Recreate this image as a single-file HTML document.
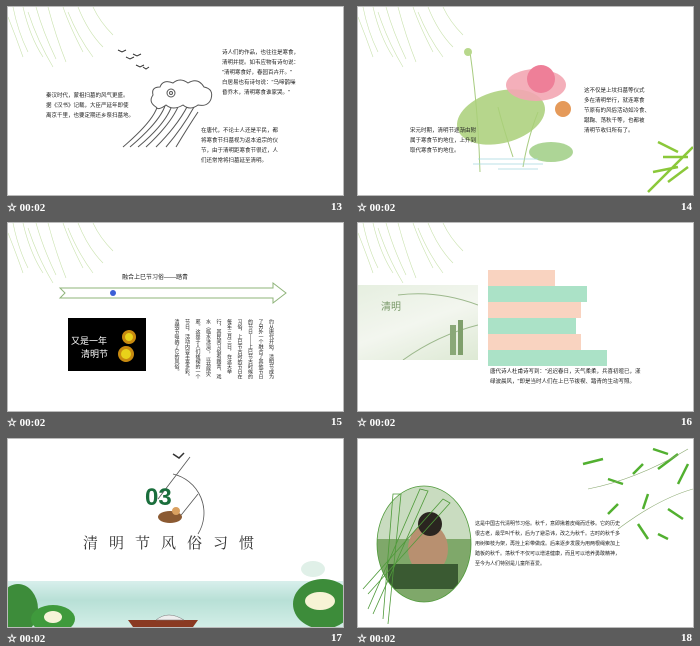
<!DOCTYPE html>
<html><head><meta charset="utf-8"><style>
*{margin:0;padding:0;box-sizing:border-box}
body{width:700px;height:646px;background:#5c5c5c;position:relative;overflow:hidden;font-family:"Liberation Sans","Noto Sans CJK SC",sans-serif}
.s{position:absolute;width:337px;height:190px;background:#fff;border:1px solid #bbb;overflow:hidden}
.f{position:absolute;color:#fff;font-weight:bold;font-size:11px;font-family:"Liberation Serif",serif}
.t{position:absolute;font-size:5.5px;line-height:10px;color:#222;white-space:nowrap}
.a{position:absolute}
</style></head><body>
<svg width="0" height="0" style="position:absolute"><defs>
<g id="wil" stroke="#a6cf78" stroke-width="0.6" fill="none" opacity="0.6">
<path d="M5 0 Q10 25 20 45"/><path d="M15 0 Q22 30 35 50"/><path d="M28 0 Q35 25 48 52"/><path d="M40 0 Q48 30 58 55"/><path d="M55 0 Q62 20 75 45"/><path d="M70 0 Q80 25 95 40"/><path d="M85 0 Q92 15 105 28"/><path d="M0 10 Q8 30 15 50"/><path d="M20 5 Q30 35 45 60"/><path d="M60 5 Q70 30 85 50"/>
</g></defs></svg>

<!-- slide 13 -->
<div class="s" style="left:7px;top:6px">
<svg class="a" style="left:0;top:0" width="120" height="70"><use href="#wil"/></svg>
<svg class="a" style="left:0;top:0" width="337" height="190">
<g stroke="#333" stroke-width="1" fill="none"><path d="M110 43l4 2 4-2M118 50l4 2 4-2M125 47l4 2 4-2M128 58l4 2 4-2M135 60l3 2 3-2"/></g>
<g stroke="#555" stroke-width="1" fill="#fff">
<path d="M115 140 Q150 110 150 95 M122 140 Q155 112 158 95 M130 140 Q160 115 165 95 M138 140 Q165 115 172 95 M148 140 Q170 118 180 98 M158 140 Q175 120 186 100 M168 140 Q180 120 190 105" fill="none"/>
<path d="M148 100 Q140 95 145 88 Q143 80 152 80 Q155 72 165 76 Q172 70 180 76 Q190 70 196 80 Q206 82 203 92 Q200 100 190 98 Q182 104 175 98 Q165 104 158 98 Q150 104 148 100Z"/>
<circle cx="163" cy="86" r="4"/><circle cx="163" cy="86" r="1.5"/>
</g></svg>
<div class="t" style="left:38px;top:84px">秦汉时代，蒙祖扫墓的风气更盛。<br>据《汉书》记载，大臣严延年即使<br>离京千里，也要定期还乡祭扫墓地。</div>
<div class="t" style="left:214px;top:41px">诗人们的作品，也往往是寒食，<br>清明并提。如韦应物有诗句说：<br>"清明寒食好，春园百卉开。"<br>白居易也有诗句说："乌啼鹊噪<br>昏乔木，清明寒食谁家哭。"</div>
<div class="t" style="left:193px;top:119px">在唐代，不论士人还是平民，都<br>将寒食节扫墓视为返本追宗的仪<br>节，由于清明距寒食节很近，人<br>们还常常将扫墓延至清明。</div>
</div>
<div class="f" style="left:7px;top:201px">☆ 00:02</div><div class="f" style="left:331px;top:201px">13</div>

<!-- slide 14 -->
<div class="s" style="left:357px;top:6px">
<svg class="a" style="left:0;top:0" width="120" height="70"><use href="#wil"/></svg>
<svg class="a" style="left:0;top:0" width="337" height="190">
<g stroke="#a8cc80" stroke-width="1" fill="none"><path d="M112 45 Q120 100 122 165"/><path d="M155 150 Q145 120 140 100"/><path d="M165 160 Q170 130 180 105"/></g>
<ellipse cx="143" cy="110" rx="45" ry="26" fill="#a9cf78" opacity="0.85" transform="rotate(-15 143 110)"/>
<ellipse cx="193" cy="145" rx="22" ry="10" fill="#9fce84" opacity="0.85"/>
<ellipse cx="178" cy="78" rx="30" ry="16" fill="#f3a6b2" opacity="0.9"/>
<ellipse cx="183" cy="72" rx="14" ry="14" fill="#ee7f98"/>
<circle cx="205" cy="102" r="8" fill="#e59a5a"/>
<circle cx="110" cy="45" r="4" fill="#b8d88c"/>
<g stroke="#a5d8e0" fill="none" stroke-width="0.8"><path d="M120 152h60M115 157h70M140 162h40"/></g>
<g stroke="#8bc83a" stroke-width="2.5" fill="none"><path d="M290 185 Q315 160 335 140M300 135l20 10M295 165l25-5M305 150l25 0M310 175l20-15"/></g>
</svg>
<div class="t" style="left:52px;top:119px">宋元时期，清明节逐渐由附<br>属于寒食节的地位，上升到<br>取代寒食节的地位。</div>
<div class="t" style="left:226px;top:79px">这不仅是上坟扫墓等仪式<br>多在清明举行，就连寒食<br>节原有的风俗活动如冷食、<br>蹴鞠、荡秋千等，也都被<br>清明节收归所有了。</div>
</div>
<div class="f" style="left:357px;top:201px">☆ 00:02</div><div class="f" style="left:681px;top:201px">14</div>

<!-- slide 15 -->
<div class="s" style="left:7px;top:222px">
<svg class="a" style="left:0;top:0" width="120" height="70"><use href="#wil"/></svg>
<svg class="a" style="left:0;top:0" width="337" height="190">
<path d="M52 65 H265 V60 L278 70 L265 80 V75 H52 L57 70 Z" fill="#fff" stroke="#8fb47a" stroke-width="1"/>
<circle cx="105" cy="70" r="3" fill="#3b5fd6"/>
</svg>
<div class="t" style="left:114px;top:50px;font-size:6px">融合上巳节习俗——踏青</div>
<div class="a" style="left:60px;top:95px;width:78px;height:53px;background:#000;color:#fff;font-size:9px;line-height:13px;padding:17px 0 0 3px">又是一年<br>&nbsp;&nbsp;&nbsp;&nbsp;清明节
<div class="a" style="left:54px;top:12px;width:14px;height:14px;border-radius:50%;background:#e8d21a;border:3px solid #c88a10"></div>
<div class="a" style="left:50px;top:28px;width:16px;height:16px;border-radius:50%;background:#e8d21a;border:3px solid #c88a10"></div></div>
<div class="t" style="left:158px;top:96px;writing-mode:vertical-rl;white-space:normal;line-height:10.5px;height:62px;width:110px;font-size:5px">约从唐代开始，清明节成为了另外一个融合了其他节日的节日——上巳节古时候的习俗，上巳节古时的节日在每年三月三日，在这天举行，其民间习俗有踏青、戏水（临水洗浴），以祛除灾邪。这是于人们祓禊的一个节日，活动内容丰富多彩。清明节吸纳了它的风俗。</div>
</div>
<div class="f" style="left:7px;top:416px">☆ 00:02</div><div class="f" style="left:331px;top:416px">15</div>

<!-- slide 16 -->
<div class="s" style="left:357px;top:222px">
<svg class="a" style="left:0;top:0" width="120" height="70"><use href="#wil"/></svg>
<div class="a" style="left:0;top:62px;width:120px;height:75px;background:linear-gradient(160deg,#e6efe0,#f3f6ef 50%,#dde9d4)"></div>
<svg class="a" style="left:0;top:62px" width="120" height="75"><g stroke="#9cb88c" fill="none" stroke-width="1"><path d="M40 10 Q80 5 120 20M45 75 Q80 50 120 40"/></g><rect x="92" y="40" width="6" height="30" fill="#8aa878"/><rect x="100" y="35" width="5" height="35" fill="#7f9f6c"/><text x="23" y="25" font-size="10" fill="#7a9a6a" font-family="Noto Sans CJK SC">清明</text></svg>
<div class="a" style="left:130px;top:47px;width:67px;height:16px;background:#f9d3c0"></div>
<div class="a" style="left:130px;top:63px;width:99px;height:16px;background:#abe2c7"></div>
<div class="a" style="left:130px;top:79px;width:93px;height:16px;background:#f9d3c0"></div>
<div class="a" style="left:130px;top:95px;width:88px;height:16px;background:#abe2c7"></div>
<div class="a" style="left:130px;top:111px;width:93px;height:16px;background:#f9d3c0"></div>
<div class="a" style="left:130px;top:127px;width:119px;height:16px;background:#abe2c7"></div>
<div class="t" style="left:132px;top:144px">唐代诗人杜甫诗写到："迟迟春日，天气柔柔，兵喜初暄已，漾<br>绿波晨风，"即是当时人们在上巳节祓禊、踏青的生动写照。</div>
</div>
<div class="f" style="left:357px;top:416px">☆ 00:02</div><div class="f" style="left:681px;top:416px">16</div>

<!-- slide 17 -->
<div class="s" style="left:7px;top:438px">
<div class="a" style="left:0;top:142px;width:337px;height:48px;background:linear-gradient(#d8efec,#b8e0d6 40%,#d4efe8)"></div>
<svg class="a" style="left:0;top:0" width="337" height="190">
<path d="M165 15l6 4 5-5" stroke="#333" stroke-width="1.5" fill="none"/>
<path d="M165 35 A40 40 0 0 1 190 95" stroke="#555" fill="none" stroke-width="0.8"/>
<path d="M182 18 L150 60 M190 55 L170 80" stroke="#555" stroke-width="0.8"/>
<text x="137" y="66" font-size="24" font-weight="bold" fill="#1a6e3c" font-family="Liberation Sans">03</text>
<ellipse cx="162" cy="78" rx="12" ry="6" fill="#8b5a32"/><circle cx="168" cy="72" r="4" fill="#d9a060"/>
<path d="M125 188 h60 l5 -7 h-70z" fill="#8a3a22"/><path d="M148 181 q12 -10 28 0z" fill="#eee" stroke="#777" stroke-width="0.5"/>
<ellipse cx="10" cy="170" rx="20" ry="25" fill="#3d8c3a"/><ellipse cx="45" cy="180" rx="22" ry="14" fill="#3f9a3c"/><ellipse cx="45" cy="178" rx="9" ry="6" fill="#f6f4d8"/>
<ellipse cx="315" cy="165" rx="30" ry="25" fill="#3d8c3a"/><ellipse cx="312" cy="162" rx="15" ry="9" fill="#f7f3d5"/><ellipse cx="305" cy="130" rx="12" ry="8" fill="#d8ece2" opacity="0.8"/>
</svg>
<div class="a" style="left:75px;top:93px;font-size:15px;letter-spacing:11px;color:#333;font-family:'Liberation Serif','Noto Serif CJK SC',serif">清明节风俗习惯</div>
</div>
<div class="f" style="left:7px;top:632px">☆ 00:02</div><div class="f" style="left:331px;top:632px">17</div>

<!-- slide 18 -->
<div class="s" style="left:357px;top:438px">
<svg class="a" style="left:0;top:0" width="337" height="190">
<defs><clipPath id="ov"><ellipse cx="66" cy="105" rx="47" ry="58"/></clipPath></defs>
<g clip-path="url(#ov)"><rect x="0" y="40" width="120" height="140" fill="#7fa86a"/><rect x="10" y="40" width="110" height="60" fill="#c9dcc0"/><ellipse cx="70" cy="110" rx="20" ry="25" fill="#b89070"/><circle cx="72" cy="85" r="12" fill="#2a2520"/><rect x="30" y="125" width="70" height="25" fill="#3a5a32"/></g>
<ellipse cx="66" cy="105" rx="47" ry="58" fill="none" stroke="#4f9a3a" stroke-width="0.8"/>
<g stroke="#4f9a3a" fill="none" stroke-width="0.8"><path d="M25 180 L35 55 L43 55 L30 185"/><path d="M10 170 L62 50 L70 52 L15 175"/><path d="M5 150 L85 60 L92 64 L10 155"/></g>
<g stroke="#52b030" stroke-width="2.5" fill="none"><path d="M250 40l15 5M275 35l10-10M260 65l-10 10M290 55l-5 15M300 30l20 -15M310 70l15 10M280 85l10 15M245 20l-20 5M320 45l10-20M295 10l15 5M300 95l10 5"/></g>
<g stroke="#8aa870" stroke-width="0.6" fill="none"><path d="M230 50 Q280 40 330 10M260 90 Q300 60 335 50"/></g>
</svg>
<div class="t" style="left:117px;top:80px;font-size:5px">这是中国古代清明节习俗。秋千，意即揪着皮绳而迁移。它的历史<br>很古老，最早叫千秋，后为了避忌讳，改之为秋千。古时的秋千多<br>用树桠枝为架，再拴上彩带做成。后来逐步发展为用两根绳索加上<br>踏板的秋千。荡秋千不仅可以增进健康，而且可以培养勇敢精神，<br>至今为人们特别是儿童所喜爱。</div>
</div>
<div class="f" style="left:357px;top:632px">☆ 00:02</div><div class="f" style="left:681px;top:632px">18</div>
</body></html>
